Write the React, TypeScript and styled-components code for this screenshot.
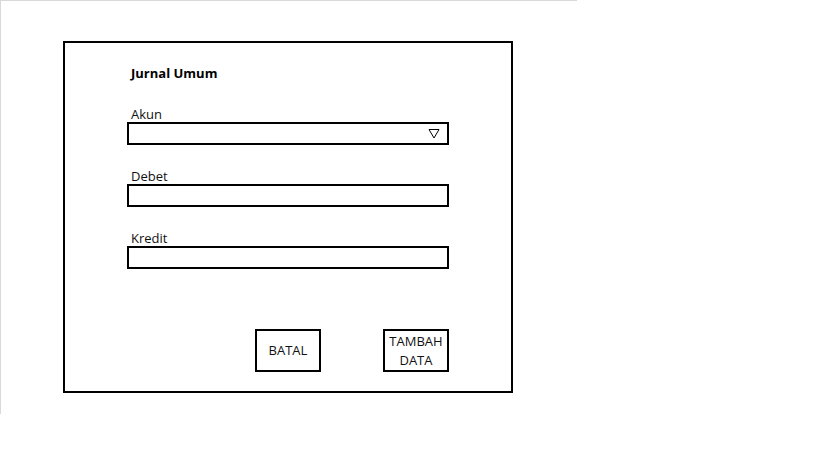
import React from "react";
import styled, { createGlobalStyle } from "styled-components";

const Global = createGlobalStyle`
  html, body { margin: 0; padding: 0; background: #fff; }
  body { font-family: "Open Sans", "Liberation Sans", sans-serif; color: #000; }
`;

const Canvas = styled.div`
  width: 577px;
  height: 414px;
  box-sizing: border-box;
  border-top: 1px solid #d9d9d9;
  border-left: 1px solid #d9d9d9;
  padding: 40px 0 0 62px;
`;

const Frame = styled.div`
  box-sizing: border-box;
  width: 450px;
  height: 352px;
  border: 2px solid #000;
  padding: 21px 62px 0 62px;
  display: flex;
  flex-direction: column;
`;

const Title = styled.div`
  font-weight: 700;
  font-size: 13px;
  line-height: 18px;
  padding-left: 4px;
  margin-bottom: 24px;
  color: #000;
`;

const Field = styled.div`
  display: flex;
  flex-direction: column;
  margin-bottom: 23px;
`;

const Label = styled.div`
  font-size: 13px;
  line-height: 17px;
  padding-left: 4px;
  height: 16px;
  color: #111;
`;

const Box = styled.div`
  box-sizing: border-box;
  width: 322px;
  height: 23px;
  border: 2px solid #000;
  display: flex;
  align-items: center;
  justify-content: flex-end;
  padding-right: 7px;
`;

const Actions = styled.div`
  display: flex;
  justify-content: flex-end;
  gap: 62px;
  margin-top: 37px;
`;

const Button = styled.div`
  box-sizing: border-box;
  width: 66px;
  height: 43px;
  border: 2px solid #000;
  display: flex;
  align-items: center;
  justify-content: center;
  text-align: center;
  font-size: 13px;
  line-height: 19px;
  color: #111;
`;

const Triangle = () => (
  <svg width="12" height="11" viewBox="0 0 12 11">
    <path d="M1 1.5 L11 1.5 L6 10 Z" fill="none" stroke="#000" strokeWidth="1" />
  </svg>
);

export default function App() {
  return (
    <>
      <Global />
      <Canvas>
        <Frame>
          <Title>Jurnal Umum</Title>
          <Field>
            <Label>Akun</Label>
            <Box>
              <Triangle />
            </Box>
          </Field>
          <Field>
            <Label>Debet</Label>
            <Box />
          </Field>
          <Field>
            <Label>Kredit</Label>
            <Box />
          </Field>
          <Actions>
            <Button>BATAL</Button>
            <Button>
              TAMBAH
              <br />
              DATA
            </Button>
          </Actions>
        </Frame>
      </Canvas>
    </>
  );
}
